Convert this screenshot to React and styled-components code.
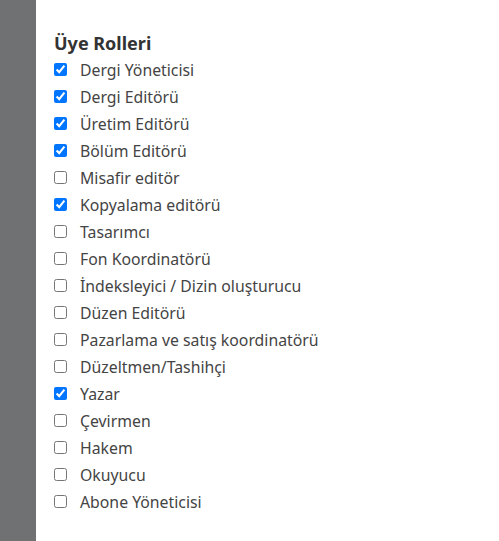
import React from 'react';
import styled, { createGlobalStyle } from 'styled-components';

const GlobalStyle = createGlobalStyle`
  html, body {
    margin: 0;
    padding: 0;
    background: #fff;
    font-family: "Noto Sans", "Open Sans", sans-serif;
  }
`;

const roles = [
  { id: 1, label: 'Dergi Yöneticisi', checked: true },
  { id: 2, label: 'Dergi Editörü', checked: true },
  { id: 3, label: 'Üretim Editörü', checked: true },
  { id: 4, label: 'Bölüm Editörü', checked: true },
  { id: 5, label: 'Misafir editör', checked: false },
  { id: 6, label: 'Kopyalama editörü', checked: true },
  { id: 7, label: 'Tasarımcı', checked: false },
  { id: 8, label: 'Fon Koordinatörü', checked: false },
  { id: 9, label: 'İndeksleyici / Dizin oluşturucu', checked: false },
  { id: 10, label: 'Düzen Editörü', checked: false },
  { id: 11, label: 'Pazarlama ve satış koordinatörü', checked: false },
  { id: 12, label: 'Düzeltmen/Tashihçi', checked: false },
  { id: 13, label: 'Yazar', checked: true },
  { id: 14, label: 'Çevirmen', checked: false },
  { id: 15, label: 'Hakem', checked: false },
  { id: 16, label: 'Okuyucu', checked: false },
  { id: 17, label: 'Abone Yöneticisi', checked: false },
];

const App = () => {
  return (
    <Page>
      <GlobalStyle />
      <Sidebar />
      <Content>
        <Title>Üye Rolleri</Title>
        <List>
          {roles.map((role) => (
            <Row key={role.id}>
              <Check type="checkbox" defaultChecked={role.checked} />
              <Label>{role.label}</Label>
            </Row>
          ))}
        </List>
      </Content>
    </Page>
  );
};

const Page = styled.div`
  display: flex;
  min-height: 541px;
`;

const Sidebar = styled.div`
  width: 36px;
  flex-shrink: 0;
  background: #707173;
`;

const Content = styled.div`
  flex: 1;
  padding: 31px 18px 0;
`;

const Title = styled.h2`
  margin: 0 0 1px;
  font-size: 18px;
  font-weight: 700;
  color: #333;
  line-height: 24px;
`;

const List = styled.ul`
  list-style: none;
  margin: 0;
  padding: 0;
`;

const Row = styled.li`
  display: flex;
  align-items: center;
  height: 27px;
`;

const Check = styled.input`
  width: 13px;
  height: 13px;
  margin: 0 13px 0 0;
  accent-color: #0075ff;
`;

const Label = styled.span`
  font-size: 15.8px;
  color: #444;
`;

export default App;
